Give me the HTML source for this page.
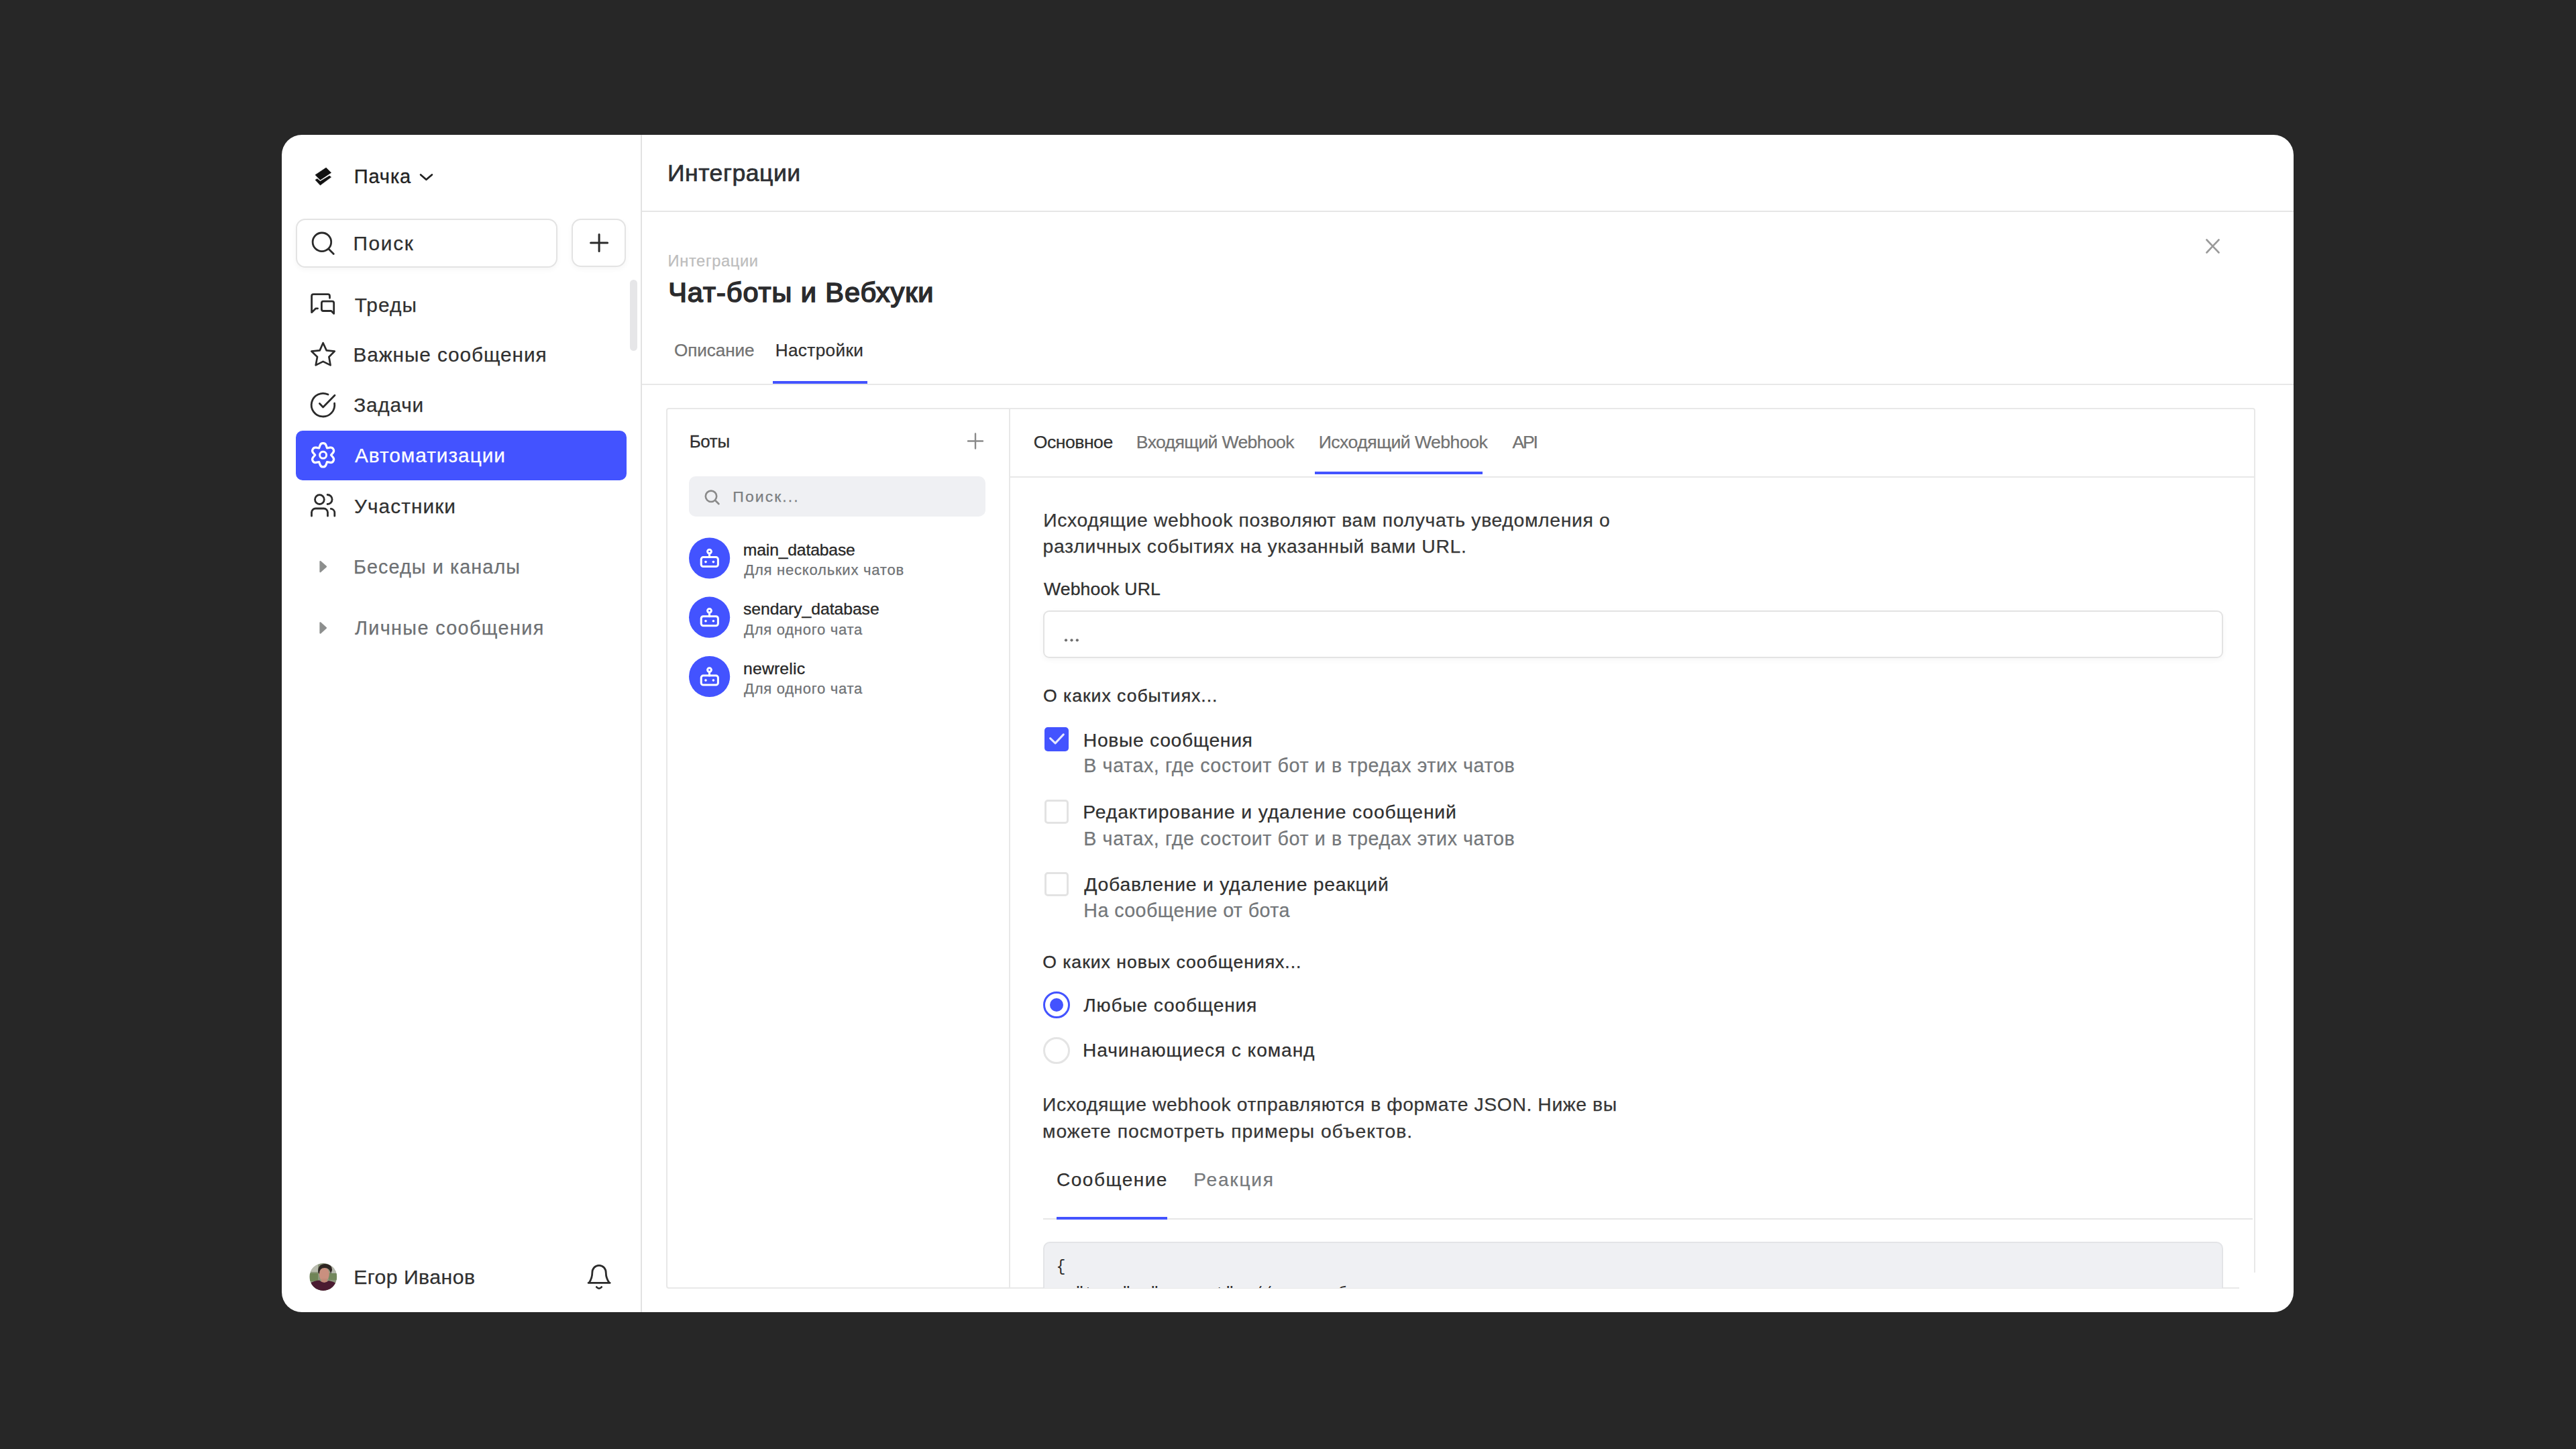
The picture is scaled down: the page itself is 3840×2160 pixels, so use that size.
<!DOCTYPE html>
<html><head><meta charset="utf-8"><style>
*{margin:0;padding:0;box-sizing:border-box}
html,body{width:3840px;height:2160px;overflow:hidden}
body{background:#272727;font-family:"Liberation Sans",sans-serif;position:relative}
.t{position:absolute;white-space:nowrap}
.a{position:absolute}
</style></head><body>
<div class="a" style="left:420px;top:201px;width:2999px;height:1755px;border-radius:30px;background:#fff"></div>
<div class="a" style="left:955px;top:201px;width:2px;height:1755px;background:#e2e2e2"></div>
<div class="a" style="left:957px;top:314px;width:2462px;height:2px;background:#e6e6e6"></div>
<div class="a" style="left:957px;top:572px;width:2462px;height:2px;background:#e8e8e8"></div>
<div class="a" style="left:441px;top:326px;width:390px;height:73px;border:2px solid #e3e3e3;border-radius:14px;box-shadow:0 3px 8px rgba(0,0,0,0.04)"></div>
<div class="a" style="left:852px;top:326px;width:81px;height:72px;border:2px solid #e3e3e3;border-radius:14px;box-shadow:0 3px 8px rgba(0,0,0,0.04)"></div>
<div class="a" style="left:939px;top:417px;width:11px;height:106px;border-radius:6px;background:#e6e6e8"></div>
<div class="a" style="left:441px;top:642px;width:493px;height:74px;border-radius:10px;background:#4353FF"></div>
<div class="a" style="left:1152px;top:568px;width:141px;height:4px;background:#4353FF"></div>
<div class="a" style="left:993px;top:608px;width:2369px;height:1313px;border:2px solid #e8e8e8;border-radius:4px"></div>
<div class="a" style="left:1504px;top:609px;width:2px;height:1311px;background:#e8e8e8"></div>
<div class="a" style="left:1506px;top:710px;width:1855px;height:2px;background:#e8e8e8"></div>
<div class="a" style="left:1960px;top:703px;width:250px;height:4px;background:#4353FF"></div>
<div class="a" style="left:1027px;top:710px;width:442px;height:60px;border-radius:10px;background:#eff0f3"></div>
<div class="a" style="left:1555px;top:910px;width:1759px;height:71px;border:2px solid #e3e3e3;border-radius:9px;box-shadow:0 3px 8px rgba(0,0,0,0.04)"></div>
<div class="a" style="left:1557px;top:1084px;width:36px;height:36px;border-radius:5px;background:#4353FF"></div>
<div class="a" style="left:1557px;top:1192px;width:36px;height:36px;border:3px solid #e3e3e3;border-radius:5px"></div>
<div class="a" style="left:1557px;top:1300px;width:36px;height:36px;border:3px solid #e3e3e3;border-radius:5px"></div>
<div class="a" style="left:1555px;top:1478px;width:40px;height:40px;border:3px solid #4353FF;border-radius:50%"></div>
<div class="a" style="left:1565px;top:1488px;width:20px;height:20px;background:#4353FF;border-radius:50%"></div>
<div class="a" style="left:1555px;top:1546px;width:40px;height:40px;border:3px solid #e4e4e4;border-radius:50%"></div>
<div class="a" style="left:1555px;top:1816px;width:1803px;height:2px;background:#e6e6e6"></div>
<div class="a" style="left:1575px;top:1814px;width:165px;height:4px;background:#4353FF"></div>
<div class="a" style="left:3338px;top:1897px;width:26px;height:26px;background:#fff"></div>
<div class="a" style="left:1506px;top:1830px;width:1855px;height:90px;overflow:hidden">
 <div class="a" style="left:49px;top:21px;width:1759px;height:200px;border:2px solid #e3e4e7;border-radius:10px;background:#eff0f3"></div>
 <div class="a" style="left:68.5px;top:40px;font-family:'Liberation Mono',monospace;font-size:23.3px;line-height:39.5px;color:#2b2b2b;white-space:pre">{
  "type": "comment", // тип события</div>
</div>
<svg class="a" style="left:0;top:0" width="3840" height="2160" viewBox="0 0 3840 2160">
<g fill="#111" stroke="#111" stroke-width="0.6" stroke-linejoin="round">
<path d="M470,260.7 L486.1,250 L493.6,257.4 L477.4,268.2Z"/>
<path d="M470,268.2 L472.9,266.5 L477.4,270.3 L491.1,262 L493.6,264.1 L477.4,276.1Z"/>
</g>
<g fill="none" stroke="#2b2b2b" stroke-width="2.8" stroke-linecap="round" stroke-linejoin="round">
<polyline points="627.1,260.5 635.4,267.7 643.9,260.5" stroke="#222" stroke-width="2.8"/>
<circle cx="479.9" cy="360.8" r="13.8"/><line x1="490.3" y1="371.4" x2="497.3" y2="378.5"/>
<path d="M893.1,349.6V374.5M880.6,362H905.6" stroke-width="3"/>
<path d="M491.5,444.3 V441.5 Q491.5,438.7 488.7,438.7 H467.4 Q464.6,438.7 464.6,441.5 V465.7 L470.8,459.8 H473.6"/>
<path d="M482,449.1 H495 Q497.7,449.1 497.7,451.8 V467.6 L493.8,463.5 H482 Q479.4,463.5 479.4,461 V451.8 Q479.4,449.1 482,449.1Z"/>
<path d="M481.6,511.2 L486.7,522.4 L498.8,523.6 L490.4,532 L492.6,544.4 L481.6,538.9 L470.7,544.4 L473,532 L464.3,523.6 L476.7,522.4Z" stroke-width="2.7"/>
<path d="M489,588.1 A17.3,17.3 0 1 0 498.6,601.2"/>
<polyline points="476.4,601.6 481.6,606.9 499,589.2"/>
<path d="M475.65,667.99 L477.17,663.72 A4.7,4.7 0 0 1 486.03,663.72 L487.55,667.99 L492.01,667.18 A4.7,4.7 0 0 1 496.44,674.85 L493.50,678.30 L496.44,681.75 A4.7,4.7 0 0 1 492.01,689.42 L487.55,688.61 L486.03,692.88 A4.7,4.7 0 0 1 477.17,692.88 L475.65,688.61 L471.19,689.42 A4.7,4.7 0 0 1 466.76,681.75 L469.70,678.30 L466.76,674.85 A4.7,4.7 0 0 1 471.19,667.18 L475.65,667.99 Z" stroke="#fff" stroke-width="3.2"/>
<circle cx="481.6" cy="678.3" r="5" stroke="#fff" stroke-width="3"/>
<circle cx="476.4" cy="744.6" r="6.9"/>
<path d="M464.5,769.2 V764 A6,6 0 0 1 470.5,758 H482.5 A6,6 0 0 1 488.5,764 V769.2"/>
<path d="M488.1,737.5 A7,7 0 0 1 488.1,751.5"/>
<path d="M493.3,758.4 A6,6 0 0 1 498.8,764.4 V769.2"/>
<path d="M877.1,1912.4 H909.2 M878.6,1911.6 C882,1906 882.8,1902 882.8,1897.8 C882.8,1891 887,1886.4 893,1886.4 C899,1886.4 903.3,1891 903.3,1897.8 C903.3,1902 904,1906 907.8,1911.6"/>
<path d="M889.3,1918.6 Q893,1922.5 896.7,1918.6"/>
<path d="M1443,657.5 H1465 M1454,646.5 V668.5" stroke="#8a8a8a" stroke-width="2.4"/>
<circle cx="1060" cy="739.8" r="8.2" stroke="#8a8a8a" stroke-width="2.6"/><line x1="1066" y1="745.8" x2="1071.5" y2="751.2" stroke="#8a8a8a" stroke-width="2.6"/>
<path d="M3289.5,357.5 L3307.5,376.5 M3307.5,357.5 L3289.5,376.5" stroke="#9a9a9a" stroke-width="2.6"/>
<polyline points="1565.6,1100.6 1573.1,1107.9 1585.3,1094.9" stroke="#e6e8ff" stroke-width="3"/>
</g>
<g fill="#8d8f8e" stroke="#8d8f8e" stroke-width="2.2" stroke-linejoin="round">
<path d="M477.5,837 L486,844.6 L477.5,852.3Z"/>
<path d="M477.5,928.3 L486,936 L477.5,943.6Z"/>
</g>
<circle cx="1057.6" cy="832" r="30.6" fill="#4353FF"/>
<g fill="none" stroke="#fff" stroke-width="3" stroke-linecap="round" stroke-linejoin="round">
<circle cx="1057.5" cy="822.1" r="2.9"/><line x1="1057.5" y1="825.0" x2="1057.5" y2="830.5"/>
<rect x="1045.2" y="830.5" width="25.2" height="14.1" rx="3.2"/></g>
<circle cx="1052" cy="837.6" r="1.8" fill="#fff"/><circle cx="1063.4" cy="837.6" r="1.8" fill="#fff"/>
<circle cx="1057.6" cy="920.2" r="30.6" fill="#4353FF"/>
<g fill="none" stroke="#fff" stroke-width="3" stroke-linecap="round" stroke-linejoin="round">
<circle cx="1057.5" cy="910.3" r="2.9"/><line x1="1057.5" y1="913.2" x2="1057.5" y2="918.7"/>
<rect x="1045.2" y="918.7" width="25.2" height="14.1" rx="3.2"/></g>
<circle cx="1052" cy="925.8" r="1.8" fill="#fff"/><circle cx="1063.4" cy="925.8" r="1.8" fill="#fff"/>
<circle cx="1057.6" cy="1008.5" r="30.6" fill="#4353FF"/>
<g fill="none" stroke="#fff" stroke-width="3" stroke-linecap="round" stroke-linejoin="round">
<circle cx="1057.5" cy="998.6" r="2.9"/><line x1="1057.5" y1="1001.5" x2="1057.5" y2="1007.0"/>
<rect x="1045.2" y="1007.0" width="25.2" height="14.1" rx="3.2"/></g>
<circle cx="1052" cy="1014.1" r="1.8" fill="#fff"/><circle cx="1063.4" cy="1014.1" r="1.8" fill="#fff"/>
<g fill="#6e6e6e"><circle cx="1589" cy="954.3" r="2.1"/><circle cx="1597.5" cy="954.3" r="2.1"/><circle cx="1605.8" cy="954.3" r="2.1"/></g>
<defs><clipPath id="av"><circle cx="481.8" cy="1903.5" r="20.4"/></clipPath></defs>
<g clip-path="url(#av)">
<rect x="460" y="1882" width="44" height="44" fill="#8c977c"/>
<rect x="460" y="1882" width="14" height="14" fill="#b9bcae"/>
<rect x="492" y="1886" width="12" height="12" fill="#b6b9ae"/>
<rect x="462" y="1898" width="12" height="12" fill="#6f8456"/>
<rect x="490" y="1898" width="12" height="10" fill="#72875c"/>
<ellipse cx="483.2" cy="1899.5" rx="7.6" ry="10.2" fill="#c9907f"/>
<rect x="479" y="1906" width="9" height="8" fill="#c18a78"/>
<path d="M474.3,1897 Q473,1885 484,1884 Q495,1884 495.1,1893 L493,1899 Q492,1890 484,1890 Q476,1890 476,1899Z" fill="#2e2522"/>
<path d="M458,1930 L460,1914 Q468,1909 476,1908.5 Q483,1915 490,1909 Q498,1910 506,1916 L506,1930Z" fill="#4b1b31"/>
</g>
</svg>
<div class="t" id="pachka" style="left:527.72px;top:248.67px;font-size:29.07px;line-height:29.07px;letter-spacing:0.87px;color:#222;-webkit-text-stroke:0.35px #222;">Пачка</div>
<div class="t" id="poisk" style="left:526.42px;top:348.27px;font-size:29.8px;line-height:29.8px;letter-spacing:1.707px;color:#2e2e2e;-webkit-text-stroke:0.25px #2e2e2e;">Поиск</div>
<div class="t" id="n1" style="left:528.7px;top:439.77px;font-size:29.8px;line-height:29.8px;letter-spacing:1.113px;color:#303030;-webkit-text-stroke:0.25px #303030;">Треды</div>
<div class="t" id="n2" style="left:526.5px;top:514.07px;font-size:29.8px;line-height:29.8px;letter-spacing:0.903px;color:#303030;-webkit-text-stroke:0.25px #303030;">Важные сообщения</div>
<div class="t" id="n3" style="left:527.14px;top:589.37px;font-size:29.8px;line-height:29.8px;letter-spacing:0.818px;color:#303030;-webkit-text-stroke:0.25px #303030;">Задачи</div>
<div class="t" id="n4" style="left:529.0px;top:664.27px;font-size:29.8px;line-height:29.8px;letter-spacing:0.979px;color:#ffffff;-webkit-text-stroke:0.25px #ffffff;">Автоматизации</div>
<div class="t" id="n5" style="left:528.0px;top:739.77px;font-size:29.8px;line-height:29.8px;letter-spacing:1.081px;color:#303030;-webkit-text-stroke:0.25px #303030;">Участники</div>
<div class="t" id="n6" style="left:527.0px;top:831.27px;font-size:28.78px;line-height:28.78px;letter-spacing:1.093px;color:#6d7073;-webkit-text-stroke:0.25px #6d7073;">Беседы и каналы</div>
<div class="t" id="n7" style="left:529.0px;top:922.27px;font-size:28.78px;line-height:28.78px;letter-spacing:1.379px;color:#6d7073;-webkit-text-stroke:0.25px #6d7073;">Личные сообщения</div>
<div class="t" id="user" style="left:527.14px;top:1889.11px;font-size:30.23px;line-height:30.23px;letter-spacing:0.458px;color:#303030;-webkit-text-stroke:0.25px #303030;">Егор Иванов</div>
<div class="t" id="hdr" style="left:994.92px;top:241.44px;font-size:35.61px;line-height:35.61px;letter-spacing:0.509px;color:#2d2f33;-webkit-text-stroke:0.7px #2d2f33;">Интеграции</div>
<div class="t" id="crumb" style="left:995.58px;top:378.2px;font-size:23.69px;line-height:23.69px;letter-spacing:0.619px;color:#bdbdbd;-webkit-text-stroke:0.25px #bdbdbd;">Интеграции</div>
<div class="t" id="title" style="left:996.28px;top:415.91px;font-size:41.42px;line-height:41.42px;letter-spacing:0.993px;color:#2b2b2d;-webkit-text-stroke:1.7px #2b2b2d;">Чат-боты и Вебхуки</div>
<div class="t" id="t_opis" style="left:1004.92px;top:509.28px;font-size:26.16px;line-height:26.16px;letter-spacing:-0.103px;color:#727272;-webkit-text-stroke:0.25px #727272;">Описание</div>
<div class="t" id="t_nast" style="left:1155.64px;top:509.28px;font-size:26.16px;line-height:26.16px;letter-spacing:0.387px;color:#303030;-webkit-text-stroke:0.25px #303030;">Настройки</div>
<div class="t" id="boty" style="left:1027.72px;top:646.33px;font-size:25.87px;line-height:25.87px;letter-spacing:-0.315px;color:#303030;-webkit-text-stroke:0.35px #303030;">Боты</div>
<div class="t" id="bsearch" style="left:1092.34px;top:729.27px;font-size:22.97px;line-height:22.97px;letter-spacing:2.075px;color:#7a7d80;-webkit-text-stroke:0.25px #7a7d80;">Поиск...</div>
<div class="t" id="b1" style="left:1107.8px;top:808.09px;font-size:24.71px;line-height:24.71px;letter-spacing:-0.158px;color:#282828;-webkit-text-stroke:0.35px #282828;">main_database</div>
<div class="t" id="b1s" style="left:1109.22px;top:838.75px;font-size:22.09px;line-height:22.09px;letter-spacing:0.742px;color:#6f7275;-webkit-text-stroke:0.25px #6f7275;">Для нескольких чатов</div>
<div class="t" id="b2" style="left:1108.0px;top:896.49px;font-size:24.71px;line-height:24.71px;letter-spacing:-0.043px;color:#282828;-webkit-text-stroke:0.35px #282828;">sendary_database</div>
<div class="t" id="b2s" style="left:1109.0px;top:927.95px;font-size:22.09px;line-height:22.09px;letter-spacing:0.7px;color:#6f7275;-webkit-text-stroke:0.25px #6f7275;">Для одного чата</div>
<div class="t" id="b3" style="left:1108.0px;top:984.99px;font-size:24.71px;line-height:24.71px;letter-spacing:0.2px;color:#282828;-webkit-text-stroke:0.35px #282828;">newrelic</div>
<div class="t" id="b3s" style="left:1109.0px;top:1016.15px;font-size:22.09px;line-height:22.09px;letter-spacing:0.7px;color:#6f7275;-webkit-text-stroke:0.25px #6f7275;">Для одного чата</div>
<div class="t" id="s_osn" style="left:1540.78px;top:646.12px;font-size:26.6px;line-height:26.6px;letter-spacing:-0.493px;color:#303030;-webkit-text-stroke:0.25px #303030;">Основное</div>
<div class="t" id="s_in" style="left:1693.86px;top:646.12px;font-size:26.6px;line-height:26.6px;letter-spacing:-0.654px;color:#727272;-webkit-text-stroke:0.25px #727272;">Входящий Webhook</div>
<div class="t" id="s_out" style="left:1965.78px;top:646.32px;font-size:26.6px;line-height:26.6px;letter-spacing:-0.528px;color:#727272;-webkit-text-stroke:0.25px #727272;">Исходящий Webhook</div>
<div class="t" id="s_api" style="left:2254.42px;top:646.32px;font-size:26.6px;line-height:26.6px;letter-spacing:-2.16px;color:#727272;-webkit-text-stroke:0.25px #727272;">API</div>
<div class="t" id="p1a" style="left:1555.14px;top:760.58px;font-size:28.34px;line-height:28.34px;letter-spacing:0.667px;color:#363636;-webkit-text-stroke:0.25px #363636;">Исходящие webhook позволяют вам получать уведомления о</div>
<div class="t" id="p1b" style="left:1554.58px;top:800.08px;font-size:28.34px;line-height:28.34px;letter-spacing:0.625px;color:#363636;-webkit-text-stroke:0.25px #363636;">различных событиях на указанный вами URL.</div>
<div class="t" id="wurl" style="left:1556.0px;top:864.98px;font-size:26.6px;line-height:26.6px;letter-spacing:0.132px;color:#303030;-webkit-text-stroke:0.35px #303030;">Webhook URL</div>
<div class="t" id="evq" style="left:1555.0px;top:1024.29px;font-size:26.6px;line-height:26.6px;letter-spacing:0.975px;color:#303030;-webkit-text-stroke:0.35px #303030;">О каких событиях...</div>
<div class="t" id="c1" style="left:1614.86px;top:1088.68px;font-size:28.34px;line-height:28.34px;letter-spacing:0.648px;color:#303030;-webkit-text-stroke:0.25px #303030;">Новые сообщения</div>
<div class="t" id="c1s" style="left:1615.36px;top:1127.07px;font-size:28.63px;line-height:28.63px;letter-spacing:0.605px;color:#74777a;-webkit-text-stroke:0.25px #74777a;">В чатах, где состоит бот и в тредах этих чатов</div>
<div class="t" id="c2" style="left:1614.36px;top:1196.48px;font-size:28.34px;line-height:28.34px;letter-spacing:0.823px;color:#303030;-webkit-text-stroke:0.25px #303030;">Редактирование и удаление сообщений</div>
<div class="t" id="c2s" style="left:1615.36px;top:1235.77px;font-size:28.63px;line-height:28.63px;letter-spacing:0.605px;color:#74777a;-webkit-text-stroke:0.25px #74777a;">В чатах, где состоит бот и в тредах этих чатов</div>
<div class="t" id="c3" style="left:1616.36px;top:1304.18px;font-size:28.34px;line-height:28.34px;letter-spacing:0.748px;color:#303030;-webkit-text-stroke:0.25px #303030;">Добавление и удаление реакций</div>
<div class="t" id="c3s" style="left:1615.36px;top:1343.37px;font-size:28.63px;line-height:28.63px;letter-spacing:0.426px;color:#74777a;-webkit-text-stroke:0.25px #74777a;">На сообщение от бота</div>
<div class="t" id="msq" style="left:1554.14px;top:1420.89px;font-size:26.6px;line-height:26.6px;letter-spacing:0.98px;color:#303030;-webkit-text-stroke:0.35px #303030;">О каких новых сообщениях...</div>
<div class="t" id="r1" style="left:1615.28px;top:1483.5px;font-size:28.2px;line-height:28.2px;letter-spacing:0.823px;color:#303030;-webkit-text-stroke:0.25px #303030;">Любые сообщения</div>
<div class="t" id="r2" style="left:1614.0px;top:1551.4px;font-size:28.2px;line-height:28.2px;letter-spacing:0.911px;color:#303030;-webkit-text-stroke:0.25px #303030;">Начинающиеся с команд</div>
<div class="t" id="p2a" style="left:1554.0px;top:1632.48px;font-size:28.34px;line-height:28.34px;letter-spacing:0.578px;color:#363636;-webkit-text-stroke:0.25px #363636;">Исходящие webhook отправляются в формате JSON. Ниже вы</div>
<div class="t" id="p2b" style="left:1554.0px;top:1672.48px;font-size:28.34px;line-height:28.34px;letter-spacing:0.954px;color:#363636;-webkit-text-stroke:0.25px #363636;">можете посмотреть примеры объектов.</div>
<div class="t" id="sub1" style="left:1575.0px;top:1745.17px;font-size:28.05px;line-height:28.05px;letter-spacing:1.475px;color:#303030;-webkit-text-stroke:0.25px #303030;">Сообщение</div>
<div class="t" id="sub2" style="left:1779.28px;top:1745.17px;font-size:28.05px;line-height:28.05px;letter-spacing:1.81px;color:#76797c;-webkit-text-stroke:0.25px #76797c;">Реакция</div>
</body></html>
